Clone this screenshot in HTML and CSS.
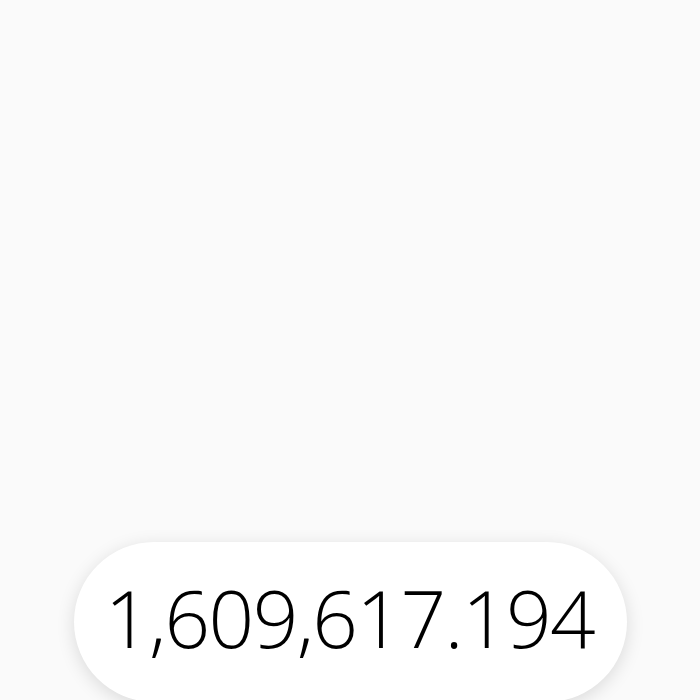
FILE: index.html
```html
<!DOCTYPE html>
<html>
<head>
<meta charset="utf-8">
<link rel="stylesheet" href="styles.css">
</head>
<body>
<main class="screen">
  <div class="display">1,609,617.194</div>
</main>
</body>
</html>
```

FILE: styles.css
```css
html, body {
  margin: 0;
  padding: 0;
  background: #fafafa;
}
.screen {
  height: 700px;
  overflow: hidden;
  display: flex;
  flex-direction: column;
  justify-content: flex-end;
  align-items: center;
}
.display {
  box-sizing: border-box;
  width: 553px;
  height: 160px;
  margin-bottom: -2px;
  margin-left: 1px;
  border-radius: 80px;
  background: #ffffff;
  box-shadow: 0 4px 18px rgba(0, 0, 0, 0.13);
  display: flex;
  align-items: center;
  justify-content: center;
  padding-bottom: 12px;
  padding-right: 2px;
  font-family: "Open Sans", "Noto Sans", sans-serif;
  font-weight: 300;
  font-size: 80px;
  color: #000;
  letter-spacing: -1.6px;
}
```
